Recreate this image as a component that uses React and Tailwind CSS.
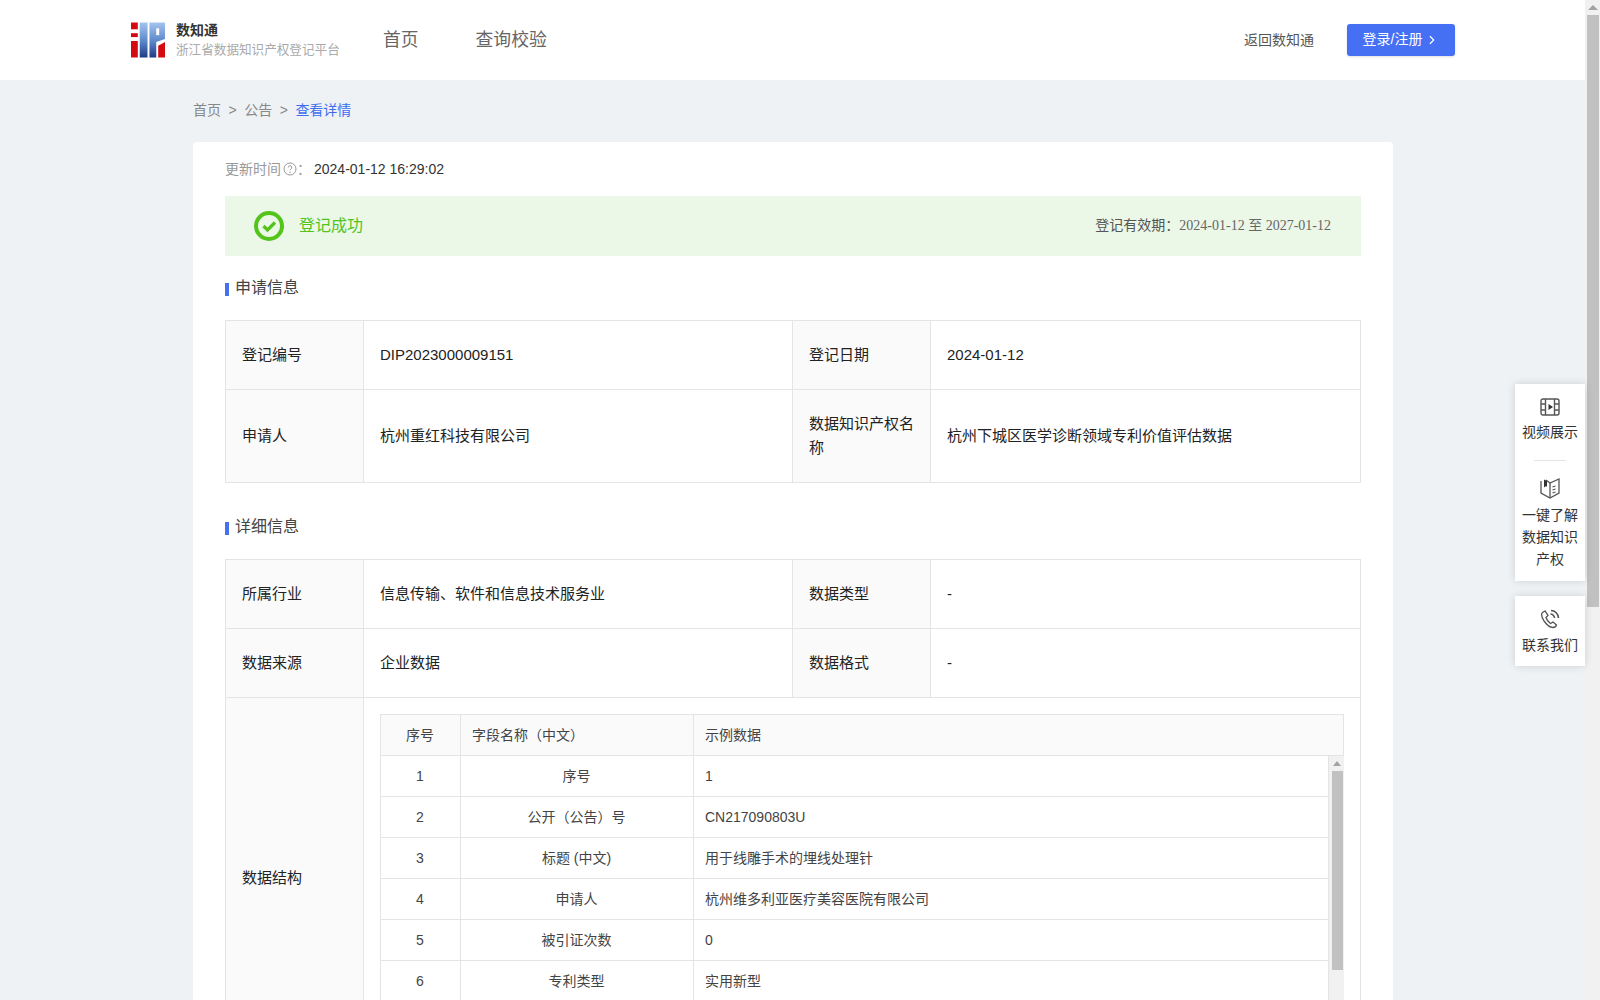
import React from 'react';
import { ChevronRight } from 'lucide-react';

const sans = { fontFamily: '"Liberation Sans", "Noto Sans CJK SC", sans-serif' };

const fieldRows = [
  ['1', '序号', '1'],
  ['2', '公开（公告）号', 'CN217090803U'],
  ['3', '标题 (中文)', '用于线雕手术的埋线处理针'],
  ['4', '申请人', '杭州维多利亚医疗美容医院有限公司'],
  ['5', '被引证次数', '0'],
  ['6', '专利类型', '实用新型'],
];

const Logo = () => (
  <svg width="34" height="36" viewBox="0 0 35 36" className="shrink-0">
    <defs>
      <linearGradient id="ipBlue" x1="0" y1="0" x2="0" y2="1">
        <stop offset="0" stopColor="#a3c4ee" />
        <stop offset="0.55" stopColor="#5a86c8" />
        <stop offset="1" stopColor="#1f3a86" />
      </linearGradient>
    </defs>
    <rect x="0" y="0" width="7" height="7" fill="#d40a12" />
    <rect x="0" y="11" width="7" height="4" fill="#d40a12" />
    <rect x="0" y="19" width="7" height="17" fill="#d40a12" />
    <rect x="9" y="0" width="8" height="36" fill="url(#ipBlue)" />
    <path d="M19 0h16v17l-9 3v16h-7z" fill="url(#ipBlue)" />
    <rect x="26" y="6" width="3" height="7" fill="#fff" />
    <path d="M28 24l7-4v16h-7z" fill="#d40a12" />
  </svg>
);

const SectionTitle = ({ children, className }) => (
  <div className={`flex items-start h-[24px] ${className}`}>
    <span className="w-[4px] h-[13px] bg-[#4570f3] mr-[6px] mt-[8px]" />
    <span className="text-[16px] leading-[24px] mt-[1px] text-[#444]">{children}</span>
  </div>
);

const Label = ({ children, className = '' }) => (
  <div className={`bg-[#fafafa] px-[16px] flex items-center text-[15px] leading-[24px] text-[#222] ${className}`}>
    {children}
  </div>
);

const Value = ({ children, className = '' }) => (
  <div className={`px-[16px] flex items-center text-[15px] leading-[24px] text-[#222] ${className}`}>
    {children}
  </div>
);

const InfoRow = ({ cells, height }) => (
  <div className={`grid grid-cols-[138px_429px_138px_1fr] border-b border-[#e4e4e4] ${height}`}>
    <Label className="border-r border-[#e4e4e4]">{cells[0]}</Label>
    <Value className="border-r border-[#e4e4e4]">{cells[1]}</Value>
    <Label className="border-r border-[#e4e4e4]">{cells[2]}</Label>
    <Value>{cells[3]}</Value>
  </div>
);

const FieldTable = () => (
  <div className="border-l border-t border-[#e4e4e4] text-[14px] text-[#444]">
    <div className="grid grid-cols-[80px_233px_1fr] h-[41px] bg-[#fafafa] border-b border-r border-[#e4e4e4] items-stretch">
      <div className="border-r border-[#e4e4e4] flex items-center justify-center pr-[1px]">序号</div>
      <div className="border-r border-[#e4e4e4] flex items-center px-[11px]">字段名称（中文）</div>
      <div className="flex items-center px-[11px]">示例数据</div>
    </div>
    <div className="flex">
      <div className="flex-1 border-r border-[#e4e4e4]">
        {fieldRows.map((row) => (
          <div key={row[0]} className="grid grid-cols-[80px_233px_1fr] h-[41px] border-b border-[#e4e4e4]">
            <div className="border-r border-[#e4e4e4] flex items-center justify-center pr-[1px]">{row[0]}</div>
            <div className="border-r border-[#e4e4e4] flex items-center justify-center pr-[1px]">{row[1]}</div>
            <div className="flex items-center px-[11px]">{row[2]}</div>
          </div>
        ))}
      </div>
      {/* inner scrollbar */}
      <div className="w-[15px] bg-[#f1f1f1] flex flex-col items-center pl-[1px]">
        <div className="h-[15px] flex items-center justify-center">
          <span className="w-0 h-0 border-l-[4px] border-r-[4px] border-b-[5px] border-l-transparent border-r-transparent border-b-[#a3a3a3]" />
        </div>
        <div className="w-[11px] h-[199px] bg-[#c1c1c1]" />
      </div>
    </div>
  </div>
);

const SideItem = ({ icon, lines }) => (
  <div className="flex flex-col items-center">
    {icon}
    <div className="mt-[5px] text-[14px] leading-[22px] text-[#333] text-center">
      {lines.map((line) => (
        <div key={line}>{line}</div>
      ))}
    </div>
  </div>
);

const FilmIcon = () => (
  <svg width="20" height="18" viewBox="0 0 20 18" fill="none" stroke="#555" strokeWidth="1.4">
    <rect x="1" y="1" width="18" height="16" rx="2" />
    <path d="M5.500 1v16M14.500 1v16M1 6h4.500M1 12h4.500M14.500 6H19M14.500 12H19" />
    <path d="M8.500 6v6l4.500-3z" fill="#333" stroke="none" />
  </svg>
);

const BookIcon = () => (
  <svg width="20" height="21" viewBox="0 0 20 21" fill="none" stroke="#555" strokeWidth="1.3">
    <path d="M1 3v12l9 5 9-5V1l-9 4-4-3" />
    <path d="M10 5v15M12.500 9l3-1M12.500 12l3-1M12.500 15l3-1" />
    <path d="M4 1.500v8l2-1.500 1 1V3z" fill="#333" stroke="none" />
  </svg>
);

const PhoneIcon = () => (
  <svg width="20" height="20" viewBox="0 0 20 20" fill="none" stroke="#555" strokeWidth="1.3">
    <path d="M5 2L2.500 3.500C1 5 1.500 8 4 12c2.500 3.500 6 6.500 9 6.500 1.500 0 3-1 3.500-2.500l-3.500-3-2.500 1.500C8.500 13 6.500 10.500 6 8.500l2-2z" />
    <path d="M10.500 5c2 0 4 2 4 4M11 1.500c4 0 7.500 3.500 7.500 7.500" strokeWidth="1.600" />
  </svg>
);

export default function App() {
  return (
    <div className="relative h-screen flex overflow-hidden bg-[#eef2f5]" style={sans}>
      <div className="flex-1 min-w-0 overflow-hidden">
        {/* Header */}
        <header className="h-[80px] bg-white flex items-center pl-[131px] pr-[130px]">
          <Logo />
          <div className="ml-[11px] w-[207px]">
            <div className="text-[14px] leading-[18px] font-bold text-[#333]">数知通</div>
            <div className="text-[12.6px] leading-[18px] mt-[2px] text-[#aaa]">浙江省数据知识产权登记平台</div>
          </div>
          <nav className="flex gap-[57px] text-[17.8px] text-[#666]">
            <span>首页</span>
            <span>查询校验</span>
          </nav>
          <div className="ml-auto flex items-center">
            <span className="text-[14px] text-[#555] mr-[33px]">返回数知通</span>
            <button className="w-[108px] h-[32px] pb-[1px] bg-[#4570f3] rounded-[3px] text-white text-[14px] flex items-center justify-center shadow-sm">
              登录/注册
              <ChevronRight size={14} className="ml-[3px]" />
            </button>
          </div>
        </header>

        <main className="w-[1200px] ml-[193px]">
          {/* Breadcrumb */}
          <div className="h-[60px] mb-[2px] flex items-center text-[14px] text-[#888]">
            <span>首页</span>
            <span className="mx-[7.5px]">&gt;</span>
            <span>公告</span>
            <span className="mx-[7.5px]">&gt;</span>
            <span className="text-[#3d6ef0]">查看详情</span>
          </div>

          <div className="bg-white rounded-t-[4px] px-[32px] pt-[15px]">
            <div className="h-[24px] flex items-center text-[14px]">
              <span className="text-[#999]">更新时间</span>
              <svg width="14" height="14" viewBox="0 0 14 14" fill="none" className="ml-[2px]">
                <circle cx="7" cy="7" r="6" stroke="#999" />
                <path d="M5.200 5.500a1.800 1.800 0 1 1 2.600 1.600c-.5.300-.8.600-.8 1.200" stroke="#999" />
                <circle cx="7" cy="10.300" r="0.700" fill="#999" />
              </svg>
              <span className="text-[#999]">：</span>
              <span className="text-[#333] ml-[3px]">2024-01-12 16:29:02</span>
            </div>

            {/* Status banner */}
            <div className="mt-[15px] h-[60px] bg-[#ebf7e7] flex items-center pl-[29px] pr-[30px]">
              <svg width="30" height="30" viewBox="0 0 30 30" fill="none">
                <circle cx="15" cy="15" r="13" stroke="#52c41a" strokeWidth="4" />
                <path d="M9.500 15l4 4L21 11.500" stroke="#52c41a" strokeWidth="3.200" />
              </svg>
              <span className="ml-[15px] text-[16px] pb-[1px] text-[#52c41a]">登记成功</span>
              <div className="ml-auto text-[14px] text-[#555] pb-[2px]">
                登记有效期：
                <span style={{ fontFamily: '"Liberation Serif", "Noto Sans CJK SC", serif' }} className="text-[#666]">
                  2024-01-12 至 2027-01-12
                </span>
              </div>
            </div>

            <SectionTitle className="mt-[19px]">申请信息</SectionTitle>

            <div className="mt-[21px] border-t border-l border-r border-[#e4e4e4]">
              <InfoRow height="h-[69px]" cells={['登记编号', 'DIP2023000009151', '登记日期', '2024-01-12']} />
              <InfoRow
                height="h-[93px]"
                cells={['申请人', '杭州重红科技有限公司', '数据知识产权名称', '杭州下城区医学诊断领域专利价值评估数据']}
              />
            </div>

            <SectionTitle className="mt-[31px]">详细信息</SectionTitle>

            <div className="mt-[21px] border-t border-l border-r border-[#e4e4e4]">
              <InfoRow height="h-[69px]" cells={['所属行业', '信息传输、软件和信息技术服务业', '数据类型', '-']} />
              <InfoRow height="h-[69px]" cells={['数据来源', '企业数据', '数据格式', '-']} />
              <div className="grid grid-cols-[138px_1fr] h-[359px]">
                <Label className="border-r border-[#e4e4e4]">数据结构</Label>
                <div className="p-[16px]">
                  <FieldTable />
                </div>
              </div>
            </div>
          </div>
        </main>
      </div>

      {/* Page scrollbar */}
      <div className="w-[15px] shrink-0 bg-[#f1f1f1] flex flex-col items-center">
        <div className="h-[15px] flex items-center justify-center">
          <span className="w-0 h-0 border-l-[5px] border-r-[5px] border-b-[5px] border-l-transparent border-r-transparent border-b-[#a3a3a3]" />
        </div>
        <div className="w-[12px] h-[592px] bg-[#c1c1c1]" />
      </div>

      {/* Floating side tools */}
      <div className="absolute right-[15px] top-[384px] w-[70px] flex flex-col gap-[15px]">
        <div className="bg-white shadow-[0_0_8px_rgba(0,0,0,0.14)] pt-[14px] pb-[11px] flex flex-col items-center">
          <SideItem icon={<FilmIcon />} lines={['视频展示']} />
          <div className="w-[32px] h-px bg-[#e4e4e4] mt-[17px] mb-[17px]" />
          <SideItem icon={<BookIcon />} lines={['一键了解', '数据知识', '产权']} />
        </div>
        <div className="bg-white shadow-[0_0_8px_rgba(0,0,0,0.14)] pt-[13px] pb-[10px] flex flex-col items-center">
          <SideItem icon={<PhoneIcon />} lines={['联系我们']} />
        </div>
      </div>
    </div>
  );
}
